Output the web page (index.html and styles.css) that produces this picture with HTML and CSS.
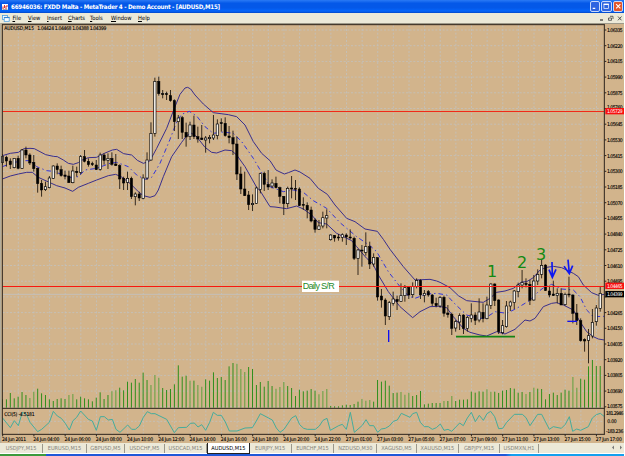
FILE: index.html
```html
<!DOCTYPE html>
<html lang="en">
    <head>
        <meta charset="UTF-8" />
        <meta name="viewport" content="width=device-width, initial-scale=1.0" />
        <title>MetaTrader 4</title>
        <link rel="stylesheet" href="styles.css">
    </head>
    <body>
        <div class="window">
            <div class="titlebar">
                <svg class="app-icon" viewBox="0 0 6 6">
                    <rect width="6" height="6" fill="#fff" />
                    <path d="M1 5V2.5M2.5 4V1M4 5V2M5 3V1" stroke="#d01818" stroke-width="0.9" />
                    <path d="M0.5 5.4H5.5" stroke="#555" stroke-width="0.6" />
                </svg>
                <span class="title">66946036: FXDD Malta - MetaTrader 4 - Demo Account - [AUDUSD,M15]</span>
                <div class="controls">
                    <svg class="control" viewBox="0 0 10 10"><path d="M2 7.5H5" stroke="#fff" stroke-width="1.4" /></svg>
                    <svg class="control" viewBox="0 0 10 10"><path d="M2 2.8H8" stroke="#fff" stroke-width="1.5" /><rect x="2.3" y="2.5" width="5.4" height="5" fill="none" stroke="#fff" stroke-width="0.8" /></svg>
                    <svg class="control close" viewBox="0 0 10 10"><path d="M2.5 2.5L7.5 7.5M7.5 2.5L2.5 7.5" stroke="#fff" stroke-width="1.3" /></svg>
                </div>
            </div>
            <div class="menubar">
                <svg class="doc-icon" viewBox="0 0 8 7">
                    <rect x="0.5" y="0.5" width="5" height="4" fill="#fff" stroke="#4a9fe0" stroke-width="0.8" />
                    <rect x="2.2" y="2.3" width="5" height="4" fill="#fff" stroke="#4a9fe0" stroke-width="0.8" />
                    <path d="M2 2.6H7.4" stroke="#2f7fd0" />
                </svg>
                <div class="menu">
                    <span><u>F</u>ile</span>
                    <span><u>V</u>iew</span>
                    <span><u>I</u>nsert</span>
                    <span><u>C</u>harts</span>
                    <span><u>T</u>ools</span>
                    <span><u>W</u>indow</span>
                    <span><u>H</u>elp</span>
                </div>
                <svg class="mdi-controls" viewBox="0 0 24 8">
                    <path d="M1 6H4" stroke="#111" />
                    <path d="M11 2.3H14V5M9.5 4H12.5V6.3H9.5Z" fill="none" stroke="#444" stroke-width="0.8" />
                    <path d="M19 2.5L22.5 6.3M22.5 2.5L19 6.3" stroke="#444" stroke-width="0.9" />
                </svg>
            </div>
            <!-- three units of the viewBox are one pixel -->
            <svg class="chart" id="chart" viewBox="0 69 1875 1260"></svg>
            <div class="tabs">
                <span>USDJPY,M15</span>
                <span>EURUSD,M15</span>
                <span>GBPUSD,M5</span>
                <span>USDCHF,M5</span>
                <span>USDCAD,M15</span>
                <span class="active">AUDUSD,M15</span>
                <span>EURJPY,M15</span>
                <span>EURCHF,M15</span>
                <span>NZDUSD,M30</span>
                <span>XAGUSD,M5</span>
                <span>XAUUSD,M15</span>
                <span>GBPJPY,M15</span>
                <span>USDMXN,H1</span>
                <svg class="scroll" viewBox="0 0 14 8"><path d="M4 2V6L2 4ZM10 2V6L12 4Z" fill="#777" /></svg>
            </div>
            <div class="taskbar"><div class="start"></div></div>
        </div>
        <script src="chart.js"></script>
    </body>
</html>
```

FILE: styles.css
```css
body {
    margin: 0;
    background-color: white;
    font-family: "DejaVu Sans Condensed", "DejaVu Sans", sans-serif;
    overflow: hidden;
}
.window {
    display: flex;
    flex-direction: column;
    width: 624px;
    height: 456px;
}
.titlebar {
    display: flex;
    align-items: center;
    height: 13px;
    padding: 0 1px 0 2px;
    background: linear-gradient(#2a7af5, #0458e8 25%, #0458e8 60%, #0566fb 85%, #0348c8);
    color: white;
}
.app-icon {
    width: 6px;
    height: 6px;
}
.title {
    margin-left: 3px;
    font-size: 6.2px;
    font-weight: bold;
    letter-spacing: -0.24px;
    line-height: 13px;
    white-space: nowrap;
}
.controls {
    display: flex;
    gap: 1px;
    margin-left: auto;
}
.control {
    box-sizing: border-box;
    width: 10.5px;
    height: 10.5px;
    border: 0.5px solid #c8d8fa;
    border-radius: 2px;
    background-color: #2f65e0;
}
.control.close {
    background-color: #e2562c;
}
.menubar {
    display: flex;
    align-items: center;
    height: 10px;
    padding: 0 1px 0 2px;
    background-color: #ece9d8;
}
.doc-icon {
    width: 8px;
    height: 7px;
}
.menu {
    display: grid;
    grid-template-columns: 15.5px 19px 21px 22px 21px 27px 20px;
    margin-left: 2.5px;
    font-size: 5.8px;
    line-height: 9px;
    color: black;
}
.menu u {
    text-decoration-thickness: 0.5px;
}
.mdi-controls {
    width: 24px;
    height: 8px;
    margin-left: auto;
}
.chart {
    display: block;
    width: 625px;
    height: 420px;
    flex: none;
}
.chart text {
    font-family: "DejaVu Sans Condensed", "DejaVu Sans", sans-serif;
    font-size: 15px;
    fill: black;
    stroke: black;
    stroke-width: 0.3;
}
.chart .label {
    font-family: "Liberation Sans", sans-serif;
    font-size: 27px;
    fill: #1f8a1f;
    stroke: none;
}
.chart .digit {
    font-family: "DejaVu Sans", sans-serif;
    font-size: 48px;
    fill: #128a12;
    stroke: none;
}
.chart .on-tag {
    fill: white;
    stroke: none;
}
.grid {
    stroke: #c2c1bf;
    stroke-width: 2.4;
    stroke-dasharray: 6 5;
}
.band {
    fill: none;
    stroke: #3a2f8c;
    stroke-width: 3;
}
.band.middle {
    stroke: #3434d8;
    stroke-dasharray: 14 9 4 9;
}
.cci {
    fill: none;
    stroke: #45ac9c;
    stroke-width: 3;
}
.volume {
    stroke: #2f8f1c;
    stroke-width: 3;
}
.volume.soft {
    stroke: #7ca552;
    stroke-width: 4;
}
.frame {
    stroke: #2c241c;
    stroke-width: 3;
}
.tabs {
    display: grid;
    grid-template-columns: 43.3px 43.4px 38.6px 39.4px 42.6px 42.3px 42.1px 42.6px 43px 39.4px 42.6px 40.7px 39.3px 1fr;
    height: 10px;
    border-bottom: 1px solid white;
    background-color: #ece9d8;
    font-size: 5.6px;
    text-align: center;
    color: #85837a;
}
.tabs span {
    border-right: 1px solid #9b988c;
    margin: 1px 0;
    line-height: 9px;
    white-space: nowrap;
}
.tabs .active {
    margin: 0;
    border: 1px solid #222;
    border-top: 0;
    background-color: white;
    line-height: 10px;
    color: black;
}
.scroll {
    justify-self: end;
    width: 14px;
    height: 9px;
}
.taskbar {
    height: 2px;
    background: linear-gradient(90deg, #1f58d8 80%, #1f58d8 81%, #14a0ee 82%);
}
.start {
    width: 46px;
    height: 2px;
    background-color: #3c9a3c;
}
```

FILE: chart.js
```js
const chart = document.getElementById("chart");
const STEP = 11.72;
const LEFT = 7.5;

// [high, top, bottom, low, filled], grouped by the y where each run starts
const candles = [
    [390, [
        [72, 80, 97, 105, 0], [77, 82, 93, 110, 1], [85, 93, 104, 117, 1], [85, 85, 113, 115, 0],
        [77, 85, 115, 118, 1], [57, 60, 115, 117, 0], [50, 60, 75, 85, 1], [70, 75, 99, 105, 1],
        [75, 97, 116, 125, 1], [113, 115, 161, 188, 1], [150, 160, 180, 200, 1], [155, 170, 179, 183, 0],
        [138, 144, 173, 175, 0], [106, 108, 145, 147, 0], [100, 108, 119, 133, 1], [107, 119, 137, 140, 1],
        [122, 135, 139, 148, 1], [122, 138, 158, 159, 1], [107, 123, 158, 160, 0], [110, 124, 128, 140, 1],
        [75, 80, 127, 133, 0], [60, 80, 94, 97, 1], [85, 94, 104, 110, 1], [95, 101, 104, 108, 1],
        [90, 105, 119, 120, 1], [68, 75, 118, 122, 0], [70, 75, 91, 104, 1], [70, 85, 91, 117, 0],
        [67, 85, 103, 107, 1], [72, 102, 107, 108, 1], [103, 107, 147, 177, 1], [140, 145, 159, 180, 1],
        [125, 145, 157, 180, 0], [140, 145, 200, 207, 1], [187, 192, 200, 226, 0], [185, 192, 204, 213, 1],
        [133, 144, 205, 208, 0], [67, 90, 144, 150, 0]
    ]],
    [180, [
        [187, 220, 300, 302, 0], [53, 64, 220, 230, 0], [50, 64, 101, 107, 1], [90, 101, 104, 115, 1],
        [95, 101, 104, 120, 1], [90, 107, 122, 125, 1], [118, 122, 185, 213, 1], [165, 174, 185, 237, 0],
        [168, 173, 217, 237, 1], [188, 217, 231, 260, 1], [185, 195, 230, 240, 0], [167, 195, 230, 237, 1],
        [200, 230, 237, 248, 1], [195, 234, 239, 240, 1], [228, 234, 240, 278, 0], [225, 232, 236, 250, 0],
        [165, 225, 234, 240, 0], [178, 192, 227, 238, 0], [175, 188, 191, 215, 1], [172, 190, 227, 230, 1],
        [198, 228, 233, 250, 1], [212, 233, 252, 285, 1], [230, 252, 342, 360, 1], [320, 342, 387, 402, 1],
        [335, 387, 407, 408, 1], [393, 405, 434, 450, 1], [403, 430, 434, 453, 0], [380, 384, 430, 432, 0],
        [338, 341, 388, 400, 0]
    ]],
    [450, [
        [65, 70, 103, 123, 1], [60, 103, 111, 120, 1], [88, 99, 108, 115, 0], [80, 100, 113, 115, 1],
        [110, 113, 139, 160, 1], [138, 139, 161, 195, 1], [110, 115, 161, 173, 0], [78, 114, 117, 145, 1],
        [90, 115, 118, 150, 1], [112, 117, 167, 168, 1], [142, 163, 166, 180, 1], [157, 166, 180, 205, 1],
        [170, 180, 213, 217, 1], [205, 210, 238, 248, 1], [210, 228, 238, 240, 0], [185, 203, 228, 235, 0],
        [178, 197, 204, 235, 0], [253, 255, 269, 272, 0], [255, 256, 264, 275, 1], [252, 261, 264, 272, 1],
        [250, 254, 262, 275, 0], [250, 255, 261, 285, 1], [238, 261, 264, 268, 1]
    ]],
    [660, [
        [50, 55, 115, 120, 1], [87, 90, 115, 165, 0], [75, 90, 93, 140, 1], [37, 80, 97, 107, 0],
        [65, 80, 132, 147, 1], [100, 112, 132, 140, 0], [112, 113, 231, 242, 1], [207, 228, 240, 263, 1],
        [235, 240, 288, 315, 1], [243, 248, 290, 300, 0], [215, 237, 250, 257, 0], [227, 238, 245, 270, 1],
        [190, 227, 244, 245, 0], [195, 203, 227, 245, 0], [200, 202, 225, 237, 1], [187, 199, 224, 233, 0],
        [175, 181, 200, 205, 0], [178, 181, 225, 237, 1], [210, 220, 226, 247, 0], [210, 215, 225, 230, 1],
        [222, 225, 250, 258, 1], [233, 250, 257, 262, 1], [228, 232, 258, 263, 0], [227, 232, 280, 290, 1],
        [255, 279, 284, 293, 1]
    ]],
    [705, [
        [233, 238, 280, 300, 1], [255, 260, 279, 290, 0], [235, 242, 261, 285, 0], [238, 240, 281, 297, 1],
        [243, 247, 280, 290, 0], [205, 240, 250, 262, 0], [232, 240, 256, 270, 1], [190, 231, 255, 262, 0],
        [205, 232, 251, 262, 1], [185, 210, 251, 253, 0], [145, 147, 211, 222, 0], [145, 147, 197, 213, 1],
        [193, 195, 290, 297, 1], [255, 272, 293, 298, 0], [198, 213, 275, 278, 0], [197, 201, 213, 228, 0],
        [165, 168, 202, 222, 0], [143, 150, 170, 187, 0], [105, 143, 150, 160, 0], [130, 145, 149, 157, 1],
        [135, 148, 196, 210, 1], [120, 138, 195, 197, 0], [103, 118, 138, 150, 0], [72, 91, 118, 130, 0],
        [88, 90, 167, 168, 1], [152, 168, 180, 187, 1], [137, 177, 182, 183, 1], [160, 175, 181, 205, 0],
        [160, 175, 210, 210, 1], [173, 178, 209, 212, 0], [125, 177, 180, 187, 1], [178, 180, 235, 265, 1],
        [207, 234, 257, 270, 1], [250, 257, 317, 320, 1], [310, 314, 318, 350, 1], [282, 302, 316, 385, 0],
        [222, 262, 303, 310, 0], [210, 219, 260, 272, 0], [155, 175, 220, 230, 0]
    ]]
];

const volumes = [
    178, 178, 159, 175, 170, 156, 165, 174, 155, 146, 160, 165, 178, 183, 177, 175, 177, 165, 162, 178,
    170, 175, 178, 184, 173, 157, 177, 165, 154, 151, 143, 151, 125, 128, 117, 128, 98, 120, 135, 105,
    113, 144, 150, 147, 133, 76, 110, 107, 122, 122, 135, 140, 118, 122, 97, 114, 111, 120, 79, 69,
    71, 87, 96, 81, 87, 135, 126, 140, 123, 138, 146, 141, 126, 138, 144, 168, 149, 154, 152, 147,
    152, 163, 153, 147, 198, 199, 199, 196, 194, 195, 192, 185, 177, 182, 180, 185, 120, 125, 122, 137,
    159, 158, 156, 164, 158, 168, 165, 153, 193, 191, 189, 189, 189, 183, 183, 168, 183, 179, 179, 178,
    155, 158, 154, 155, 148, 155, 155, 159, 152, 150, 144, 146, 158, 156, 162, 156, 143, 146, 147, 178,
    162, 158, 165, 158, 149, 152, 111, 143, 116, 119, 79, 60, 78, 78
];
const softVolumes = [7, 8, 18, 17, 28, 29, 38, 39, 40, 48, 50, 51, 60, 61, 62, 70, 71, 72, 81, 82, 83, 92, 93, 94,
    102, 103, 104, 113, 115, 124, 125, 134, 136, 146, 147];

// every run is [dx, dy, points]
const upper = [
    [0, 390, "7,77 31,70 55,67 72,56 90,55 103,56 120,65 137,74 160,79 172,80 190,90 205,100 220,103 235,98 242,92 265,83 290,82 313,70 337,60 350,58 371,71 395,75 412,91 430,100 445,95"],
    [360, 180, "90,302 110,265 140,205 163,145 180,103 195,84 203,82 212,87 225,105 250,132 280,158 325,164 350,170 375,195 400,245 425,280"],
    [720, 450, "90,32 108,60 120,66 133,72 145,68 165,60 180,66 210,85 235,115 262,133 285,165 320,205 345,215 375,237 412,244 430,268"],
    [900, 660, "270,88 310,140 345,180 390,178 410,183"],
    [1290, 705, "30,142 60,158 85,182 110,197 160,202 180,190 200,172 225,168 250,160 275,141"],
    [1530, 705, "50,140 70,128 90,105 110,97 130,94 155,98 190,115 205,125 220,150 245,173 265,181 283,178"]
];
const lower = [
    [0, 390, "7,147 31,138 55,132 80,127 97,127 115,142 150,158 170,167 195,174 218,184 235,172 265,160 290,150 325,137 347,133 365,141 390,160 415,185 430,197 450,202"],
    [360, 180, "105,407 115,390 130,350 155,290 185,247 200,227 215,220 230,230 255,262 275,277 290,279 315,270 335,272 350,285 375,320 410,382"],
    [720, 450, "60,122 90,170 105,171 140,176 170,168 190,177 215,195 235,218 260,222 290,250 335,272 350,290"],
    [900, 660, "200,115 218,130 235,165 265,215 300,260 338,293 360,275 390,260 415,259"],
    [1290, 705, "50,218 70,245 100,280 120,292 150,300 170,303 200,290 225,297 255,283 285,255"],
    [1530, 705, "60,258 75,250 100,215 125,205 140,203 160,210 190,225 210,260 230,290 250,305 265,312 283,315"]
];
const middle = [
    [0, 390, "7,110 40,98 67,92 90,92 110,110 140,122 160,124 190,135 205,143 235,140 255,120 290,115 330,100 350,97 385,110 410,135"],
    [360, 180, "75,358 95,352 120,310 150,238 170,185 185,163 208,154 230,168 255,200 280,220 310,216 340,220 365,245 400,295"],
    [720, 450, "90,110 130,125 160,120 190,127 220,152 260,175 300,218 350,260 390,287"],
    [900, 660, "230,95 265,155 300,200 325,228 345,235 380,222"],
    [1290, 705, "20,175 50,180 75,207 110,240 145,250 165,250 195,230 230,235 260,220"],
    [1530, 705, "60,196 85,170 105,155 125,148 155,162 190,165 210,185 230,225 250,245 283,244"]
];
const cci = [
    [0, 1020, "7,233 31,263 43,242 55,257 67,217 79,222 90,247 113,275 125,268 148,247 160,214 172,228 184,235 196,250 208,270 219,242 230,232 242,213 265,238 277,243 289,271 301,230 313,230 325,240 337,238 348,268 360,277 383,255 395,268 406,268 418,258 430,232 442,215 454,221 465,221 500,238 523,278 535,263 560,262 571,250 583,249 594,261"],
    [600, 1020, "5,254 17,271 29,247 40,217 52,226 64,226 76,246 88,273 111,273 135,264 157,263 169,243 181,221 217,240 229,264 240,277 252,268 275,234 287,227 299,254 311,265 322,268 346,268 358,258 369,241 381,235 391,271 416,257 427,253 439,268 451,217 463,277 487,256 498,239 509,257 521,257 533,277 544,267 556,265 568,258 580,244 592,240 604,220"],
    [1230, 1020, "0,232 8,221 20,217 31,247 43,260 55,260 67,268 79,263 91,252 102,271 114,268 125,274 149,249 160,257 172,234 184,217 196,245 208,226 220,241 231,221 242,214 254,230 266,266 278,265 290,247 313,223 337,223 348,233 360,257 383,223 395,223 418,268 430,260 454,265 466,253 478,230 488,274 500,267 512,271 535,260 547,234 559,224 571,220 582,229"]
];

const draw = (name, attrs, text) => {
    let el = document.createElementNS("http://www.w3.org/2000/svg", name);
    for (let key in attrs) {
        el.setAttribute(key, attrs[key]);
    }
    if (text) {
        el.textContent = text;
    }
    chart.appendChild(el);
};

const line = (x1, y1, x2, y2, attrs) => draw("line", { x1, y1, x2, y2, ...attrs });
const rect = (x, y, width, height, fill) => draw("rect", { x, y, width, height, fill });

const drawRuns = (runs, cls) => {
    let points = [];
    runs.forEach(([dx, dy, list]) => {
        list.split(" ").forEach((pair) => {
            let [x, y] = pair.split(",").map(Number);
            points.push(x + dx + "," + (y + dy));
        });
    });
    draw("polyline", { points: points.join(" "), class: cls });
};

// background and grid
rect(0, 69, 1875, 1260, "#d2b48c");
rect(0, 69, 1875, 3, "#9d998a");
rect(0, 69, 4, 1260, "#b5ae9c");
for (let k = 0; k < 38; k++) {
    line(55 + k * 46.88, 76, 55 + k * 46.88, 1302, { class: "grid" });
}
for (let k = 0; k < 25; k++) {
    line(8, 90 + k * 47.1, 1812, 90 + k * 47.1, { class: "grid" });
}
line(8, 1264, 1812, 1264, { class: "grid" });

volumes.forEach((top, i) => {
    let x = LEFT + i * STEP;
    line(x, top + 1020, x, 1223, { class: softVolumes.includes(i) ? "volume soft" : "volume" });
});
drawRuns(cci, "cci");

line(8, 883, 1812, 883, { stroke: "#c3c0ba", "stroke-width": 3 });
line(8, 334.5, 1812, 334.5, { stroke: "#f02a18", "stroke-width": 3 });
drawRuns(upper, "band");
drawRuns(lower, "band");
drawRuns(middle, "band middle");

let index = 0;
candles.forEach(([base, rows]) => {
    rows.forEach(([high, top, bottom, low, filled]) => {
        let x = LEFT + index * STEP;
        line(x, base + high, x, base + low, { stroke: "#1c140c", "stroke-width": 2.6 });
        draw("rect", {
            x: x - 3.5,
            y: base + top,
            width: 7,
            height: Math.max(bottom - top, 3),
            fill: filled ? "#000" : "#f4f0ea",
            stroke: "#000",
            "stroke-width": filled ? 1.5 : 2
        });
        index++;
    });
});
line(8, 859.5, 1812, 859.5, { stroke: "#f81810", "stroke-width": 3 });

// notes on the chart
rect(906, 842, 111, 34, "#fff");
draw("text", { x: 908, y: 867, class: "label", textLength: 96 }, "Daily S/R");
draw("text", { x: 1461, y: 830, class: "digit" }, "1");
draw("text", { x: 1551, y: 804, class: "digit" }, "2");
draw("text", { x: 1608, y: 780, class: "digit" }, "3");
line(1368, 1010, 1545, 1010, { stroke: "#148414", "stroke-width": 5 });
line(1166, 990, 1166, 1026, { stroke: "#1010f0", "stroke-width": 4 });
line(1702, 964, 1731, 964, { stroke: "#1010f0", "stroke-width": 4 });
draw("path", { d: "M1656 786L1657 831M1647 809L1657 832L1668 808M1704 779L1708 820M1692 799L1708 821L1718 797", fill: "none", stroke: "#1018f0", "stroke-width": 5 });

// frame and scales
rect(1814, 76, 58, 1253, "#d2b48c");
rect(1872, 69, 3, 1260, "#fff");
line(6, 74, 1814, 74, { class: "frame" });
line(7, 73, 7, 1304, { class: "frame" });
line(1813, 73, 1813, 1304, { class: "frame" });
line(6, 1225, 1814, 1225, { class: "frame" });
line(6, 1303, 1814, 1303, { class: "frame" });
for (let k = 0; k < 25; k++) {
    let y = 90 + k * 47.1;
    line(1813, y, 1819, y, { class: "frame" });
    // the price tag covers the label at k = 17
    if (k !== 17) {
        draw("text", { x: 1821, y: Math.min(y + (k === 5 ? 0 : 6), 1225), textLength: 47 }, (1.06335 - k * 0.00115).toFixed(5));
    }
}
const tags = [[334, "1.05729", "#f81010"], [858, "1.04465", "#f81010"], [883, "1.04399", "#000"]];
tags.forEach(([y, price, color]) => {
    rect(1816, y - 10, 56, 19, color);
    draw("text", { x: 1821, y: y + 6, class: "on-tag", textLength: 47 }, price);
});
draw("text", { x: 1818, y: 1244, textLength: 52 }, "181.2946");
draw("text", { x: 1822, y: 1270, textLength: 28 }, "0.00");
draw("text", { x: 1818, y: 1300, textLength: 52 }, "-183.236");
draw("text", { x: 13, y: 91, textLength: 89 }, "AUDUSD,M15");
draw("text", { x: 112, y: 91, textLength: 207 }, "1.04424 1.04468 1.04388 1.04399");
draw("text", { x: 13, y: 1247, textLength: 91 }, "CCI(5) -4.5181");

const times = ["24 Jun 2011", "24 Jun 04:00", "24 Jun 06:00", "24 Jun 08:00", "24 Jun 10:00", "24 Jun 12:00",
    "24 Jun 14:00", "24 Jun 16:00", "24 Jun 18:00", "24 Jun 20:00", "24 Jun 22:00", "27 Jun 01:00",
    "27 Jun 03:00", "27 Jun 05:00", "27 Jun 07:00", "27 Jun 09:00", "27 Jun 11:00", "27 Jun 13:00",
    "27 Jun 15:00", "27 Jun 17:00"];
times.forEach((time, k) => {
    let x = 6 + k * 93.75;
    line(x + 2, 1303, x + 2, 1309, { class: "frame" });
    draw("text", { x: x, y: 1322, textLength: k ? 78 : 72 }, time);
});
```
